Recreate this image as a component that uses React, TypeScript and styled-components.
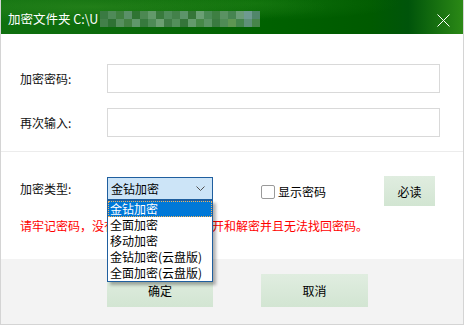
import React from "react";
import styled, { createGlobalStyle } from "styled-components";

const GlobalStyle = createGlobalStyle`
  html, body {
    margin: 0;
    padding: 0;
    background: #ffffff;
  }
  body {
    font-family: "Noto Sans CJK SC", "Noto Sans", sans-serif;
    font-size: 12px;
    color: #000;
  }
`;

const mosaicColors = [
  "#3a7a42", "#4f8a58", "#3f8040", "#5a9068", "#2f7433", "#4c8852", "#62996a", "#387a3c",
  "#4f8c5a", "#43814a", "#5c946a", "#357538", "#6a9f74", "#4a8a55", "#3e7f42", "#5a9262",
  "#468450", "#6a9c76", "#6e9a90", "#50866a",
  "#43804a", "#2f7234", "#578f5e", "#438042", "#5f976a", "#377a3e", "#4e8b56", "#6c9f72",
  "#3f7b45", "#538f5a", "#35753a", "#649a6c", "#468847", "#5a9463", "#3a7a40", "#4f8c55",
  "#5e9652", "#44854c", "#5e9078", "#47854a",
];

const options = [
  "金钻加密",
  "全面加密",
  "移动加密",
  "金钻加密(云盘版)",
  "全面加密(云盘版)",
];

const App: React.FC = () => {
  return (
    <>
      <GlobalStyle />
      <StyledWindow>
        <StyledTitleBar>
          <StyledTitle>加密文件夹 C:\U</StyledTitle>
          <StyledMosaic>
            {mosaicColors.map((c, i) => (
              <StyledMosaicCell key={i} $color={c} />
            ))}
          </StyledMosaic>
          <StyledClose>
            <svg width="13" height="13" viewBox="0 0 13 13">
              <path d="M0.5 0.5 L12.5 12.5 M12.5 0.5 L0.5 12.5" stroke="#fff" strokeWidth="1" fill="none" />
            </svg>
          </StyledClose>
        </StyledTitleBar>

        <StyledBody>
          <StyledFormSection>
            <StyledRow>
              <StyledLabel>加密密码:</StyledLabel>
              <StyledInput type="password" />
            </StyledRow>
            <StyledRow>
              <StyledLabel>再次输入:</StyledLabel>
              <StyledInput type="password" />
            </StyledRow>
          </StyledFormSection>

          <StyledDivider />

          <StyledOptionsSection>
            <StyledOptionsRow>
              <StyledTypeLabel>加密类型:</StyledTypeLabel>
              <StyledSelectWrap>
                <StyledSelect>
                  <span>金钻加密</span>
                  <svg width="9" height="5" viewBox="0 0 9 5">
                    <path d="M0.5 0.5 L4.5 4.5 L8.5 0.5" stroke="#505050" strokeWidth="1" fill="none" />
                  </svg>
                </StyledSelect>
                <StyledList>
                  {options.map((o, i) => (
                    <StyledOption key={o} $active={i === 0}>
                      {o}
                    </StyledOption>
                  ))}
                </StyledList>
              </StyledSelectWrap>
              <StyledCheckLabel>
                <StyledCheckbox />
                <span>显示密码</span>
              </StyledCheckLabel>
              <StyledReadButton>必读</StyledReadButton>
            </StyledOptionsRow>
            <StyledWarning>
              请牢记密码，没有密码将无法正常打开和解密并且无法找回密码。
            </StyledWarning>
          </StyledOptionsSection>
        </StyledBody>

        <StyledFooter>
          <StyledFooterButton $width={106}>确定</StyledFooterButton>
          <StyledFooterButton $width={107}>取消</StyledFooterButton>
        </StyledFooter>
      </StyledWindow>
    </>
  );
};

const StyledWindow = styled.div`
  width: 464px;
  height: 325px;
  box-sizing: border-box;
  display: flex;
  flex-direction: column;
  background: #fff;
  border-left: 1px solid #d4d4d4;
  border-right: 1px solid #d4d4d4;
  border-bottom: 1px solid #d4d4d4;
  overflow: hidden;
`;

const StyledTitleBar = styled.div`
  height: 34px;
  margin: 0 -1px;
  padding: 4px 0 0 8px;
  box-sizing: border-box;
  display: flex;
  align-items: center;
  color: #fff;
  background:
    radial-gradient(ellipse at 20% 20%, rgba(60, 150, 40, 0.45), transparent 45%),
    radial-gradient(ellipse at 55% 10%, rgba(40, 140, 30, 0.35), transparent 40%),
    linear-gradient(90deg, #0f700f 0%, #0b6a0b 25%, #006200 55%, #005a00 80%, #00540a 88%, #2c8a16 100%);
`;

const StyledTitle = styled.div`
  font-size: 12.5px;
  line-height: 16px;
  white-space: pre;
`;

const StyledMosaic = styled.div`
  display: grid;
  grid-template-columns: repeat(20, 8px);
  grid-template-rows: repeat(2, 8px);
  margin-left: 2px;
  filter: blur(0.4px);
`;

const StyledMosaicCell = styled.div<{ $color: string }>`
  background: ${({ $color }) => $color};
`;

const StyledClose = styled.div`
  margin-left: auto;
  margin-right: 14px;
  margin-top: 2px;
  width: 13px;
  height: 13px;
  display: flex;
`;

const StyledBody = styled.div`
  height: 225px;
  display: flex;
  flex-direction: column;
`;

const StyledFormSection = styled.div`
  padding: 30px 0 14px 19px;
  display: flex;
  flex-direction: column;
  gap: 15px;
`;

const StyledRow = styled.div`
  display: flex;
  align-items: center;
  height: 29px;
`;

const StyledLabel = styled.div`
  width: 87px;
  font-size: 12px;
  line-height: 16px;
  color: #111;
`;

const StyledInput = styled.input`
  width: 333px;
  height: 29px;
  box-sizing: border-box;
  border: 1px solid #d9d9d9;
  outline: none;
  padding: 0 4px;
  background: #fff;
`;

const StyledDivider = styled.div`
  height: 1px;
  background: #ececec;
`;

const StyledOptionsSection = styled.div`
  padding: 24px 0 0 19px;
  display: flex;
  flex-direction: column;
`;

const StyledOptionsRow = styled.div`
  display: flex;
  align-items: center;
  height: 30px;
`;

const StyledTypeLabel = styled(StyledLabel)`
  align-self: flex-start;
  line-height: 25px;
`;

const StyledSelectWrap = styled.div`
  position: relative;
  align-self: flex-start;
  margin-top: 1px;
  width: 106px;
  height: 23px;
  z-index: 5;
`;

const StyledSelect = styled.div`
  height: 23px;
  box-sizing: border-box;
  border: 1px solid #1f5f9f;
  background: #cce4f7;
  display: flex;
  align-items: center;
  justify-content: space-between;
  padding: 0 7px 0 3px;
  font-size: 12px;
  line-height: 16px;
`;

const StyledList = styled.div`
  position: absolute;
  top: 23px;
  left: 0;
  width: 106px;
  box-sizing: border-box;
  border: 1px solid #1f5f9f;
  background: #fff;
  box-shadow: 3px 3px 3px rgba(0, 0, 0, 0.3);
`;

const StyledOption = styled.div<{ $active?: boolean }>`
  height: 16px;
  line-height: 16px;
  font-size: 12px;
  padding-left: 2px;
  box-sizing: border-box;
  white-space: nowrap;
  color: ${({ $active }) => ($active ? "#fff" : "#000")};
  background: ${({ $active }) => ($active ? "#0078d7" : "transparent")};
  outline: ${({ $active }) => ($active ? "1px dotted #f3b25a" : "none")};
  outline-offset: -1px;
`;

const StyledCheckLabel = styled.label`
  display: flex;
  align-items: center;
  margin-left: 48px;
  margin-top: 2px;
  font-size: 12px;
  line-height: 16px;
`;

const StyledCheckbox = styled.span`
  width: 14px;
  height: 14px;
  box-sizing: border-box;
  border: 1px solid #9a9a9a;
  border-radius: 2px;
  background: #fff;
  margin-right: 3px;
`;

const StyledReadButton = styled.div`
  margin-left: auto;
  margin-right: 28px;
  width: 51px;
  height: 30px;
  display: flex;
  align-items: center;
  justify-content: center;
  font-size: 12px;
  background: linear-gradient(180deg, #e0ede0 0%, #d2e5d2 100%);
`;

const StyledWarning = styled.div`
  margin-top: 12px;
  font-size: 12px;
  line-height: 16px;
  color: #ff0000;
  white-space: nowrap;
`;

const StyledFooter = styled.div`
  flex: 1;
  background: #f3f3f3;
  display: flex;
  gap: 48px;
  padding: 15px 0 0 106px;
  box-sizing: border-box;
`;

const StyledFooterButton = styled.div<{ $width: number }>`
  width: ${({ $width }) => $width}px;
  height: 33px;
  display: flex;
  align-items: center;
  justify-content: center;
  font-size: 12px;
  background: linear-gradient(180deg, #e0ede0 0%, #d2e5d2 100%);
`;

export default App;
